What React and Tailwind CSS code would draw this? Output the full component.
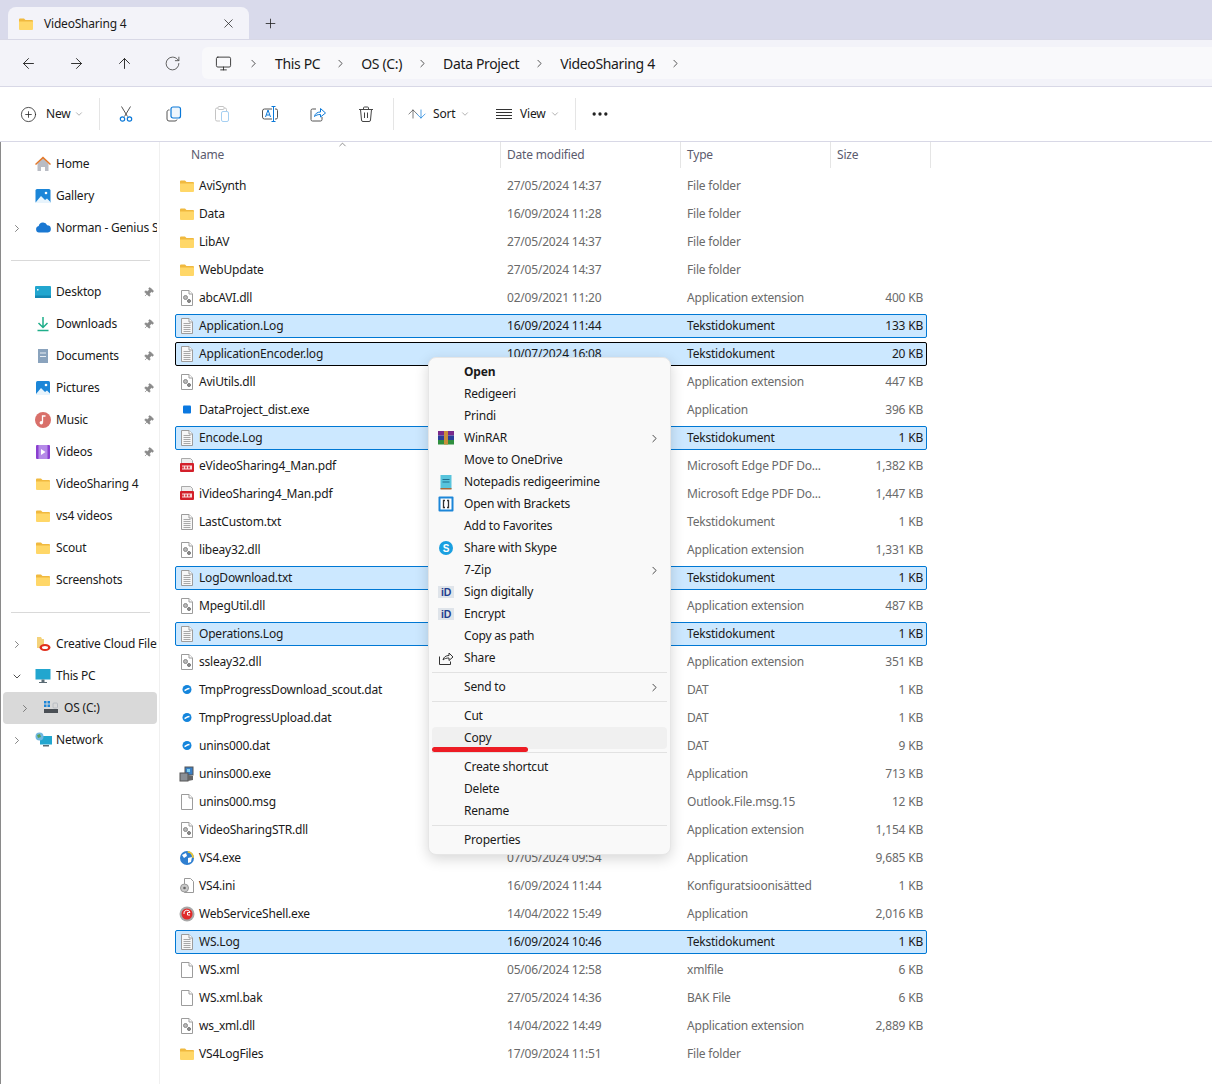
import { ArrowLeft, ArrowRight, ArrowUp, RotateCw, Monitor, ChevronRight, ChevronDown, ChevronUp, Plus, X, CirclePlus, Ellipsis, Pin, ArrowDown } from 'lucide-react';

const Page = ({ children, fold = '#fff' }) => (
  <svg width="16" height="16" viewBox="0 0 16 16" className="shrink-0">
    <path d="M2.500 .5h7.500l3.500 3.500v11.500h-11z" fill={fold} stroke="#9c9c9c" />
    <path d="M10 .5v3.500h3.500" fill="#fff" stroke="#9c9c9c" />
    {children}
  </svg>
);

const FolderIcon = ({ size = 16 }) => (
  <svg width={size} height={size} viewBox="0 0 16 16" className="shrink-0">
    <path d="M1 3.500a1 1 0 0 1 1-1h4l1.500 1.500H14a1 1 0 0 1 1 1v1H1z" fill="#f0b93f" />
    <path d="M1 5.500h14v7.500a1 1 0 0 1-1 1H2a1 1 0 0 1-1-1z" fill="#ffd768" />
  </svg>
);

const icons = {
  folder: <FolderIcon />,
  dll: (
    <Page>
      <circle cx="6.500" cy="7.500" r="2" fill="#b8b8b8" stroke="#8a8a8a" />
      <circle cx="10" cy="11" r="1.500" fill="#8f8f8f" stroke="#777" />
    </Page>
  ),
  txt: (
    <Page fold="#f7f7f7">
      <path d="M4.500 5.500h7M4.500 7.500h7M4.500 9.500h7M4.500 11.500h7M4.500 13.500h7" stroke="#a8a8a8" />
    </Page>
  ),
  blank: <Page />,
  pdf: (
    <svg width="16" height="16" viewBox="0 0 16 16" className="shrink-0">
      <path d="M2.500 .5h9l2 2v4h-11z" fill="#eee" stroke="#aaa" />
      <rect x="1" y="5" width="14" height="9" rx="1" fill="#d3202a" />
      <rect x="3" y="7.500" width="10" height="4" fill="#f8dcdc" />
      <path d="M4 8.500v2M7 8.500v2M10 8.500v2" stroke="#d3202a" strokeWidth="1.500" />
    </svg>
  ),
  square: (
    <svg width="16" height="16" viewBox="0 0 16 16" className="shrink-0">
      <rect x="4" y="3.500" width="8" height="8" rx="1" fill="#0a78e0" />
    </svg>
  ),
  dat: (
    <svg width="16" height="16" viewBox="0 0 16 16" className="shrink-0">
      <circle cx="8" cy="7.500" r="4.500" fill="#1485dc" />
      <path d="M5.500 8.500c1.500-.2 2.500-2 5-2" stroke="#fff" strokeWidth="1.400" fill="none" />
    </svg>
  ),
  setup: (
    <svg width="16" height="16" viewBox="0 0 16 16" className="shrink-0">
      <rect x="6" y="1" width="8" height="8" fill="#3a7fc4" stroke="#555" />
      <rect x="1" y="7" width="8" height="8" fill="#8a8f95" stroke="#555" />
      <path d="M9 9l5 1v4l-5 1z" fill="#666" />
      <rect x="8" y="3" width="3" height="3" fill="#7fd0f0" />
    </svg>
  ),
  globe: (
    <svg width="16" height="16" viewBox="0 0 16 16" className="shrink-0">
      <circle cx="8" cy="8" r="7" fill="#2f7fd0" />
      <path d="M3 5l4-2 1 3-3 2zM9 8l4-1-1 5-3 1z" fill="#fff" />
      <path d="M9 1a7 7 0 0 1 6 7l-2-.5A5 5 0 0 0 8.500 2.500z" fill="#f3c92e" />
    </svg>
  ),
  ini: (
    <svg width="16" height="16" viewBox="0 0 16 16" className="shrink-0">
      <path d="M5.500 .5h6l3 3v11h-9z" fill="#fff" stroke="#999" />
      <circle cx="5.500" cy="10" r="4" fill="#c9c9c9" stroke="#999" />
      <circle cx="5.500" cy="10" r="1.300" fill="#666" />
    </svg>
  ),
  service: (
    <svg width="16" height="16" viewBox="0 0 16 16" className="shrink-0">
      <circle cx="8" cy="8" r="7.500" fill="#a8a8a8" />
      <circle cx="8" cy="8" r="5.500" fill="#e02a2a" />
      <path d="M5 8a3 3 0 0 1 6-1.500H8.500V9H11" stroke="#fff" fill="none" />
    </svg>
  ),
};

const files = [
  ['AviSynth', 'folder', '27/05/2024 14:37', 'File folder', ''],
  ['Data', 'folder', '16/09/2024 11:28', 'File folder', ''],
  ['LibAV', 'folder', '27/05/2024 14:37', 'File folder', ''],
  ['WebUpdate', 'folder', '27/05/2024 14:37', 'File folder', ''],
  ['abcAVI.dll', 'dll', '02/09/2021 11:20', 'Application extension', '400 KB'],
  ['Application.Log', 'txt', '16/09/2024 11:44', 'Tekstidokument', '133 KB', 'sel'],
  ['ApplicationEncoder.log', 'txt', '10/07/2024 16:08', 'Tekstidokument', '20 KB', 'focus'],
  ['AviUtils.dll', 'dll', '', 'Application extension', '447 KB'],
  ['DataProject_dist.exe', 'square', '', 'Application', '396 KB'],
  ['Encode.Log', 'txt', '', 'Tekstidokument', '1 KB', 'sel'],
  ['eVideoSharing4_Man.pdf', 'pdf', '', 'Microsoft Edge PDF Do...', '1,382 KB'],
  ['iVideoSharing4_Man.pdf', 'pdf', '', 'Microsoft Edge PDF Do...', '1,447 KB'],
  ['LastCustom.txt', 'txt', '', 'Tekstidokument', '1 KB'],
  ['libeay32.dll', 'dll', '', 'Application extension', '1,331 KB'],
  ['LogDownload.txt', 'txt', '', 'Tekstidokument', '1 KB', 'sel'],
  ['MpegUtil.dll', 'dll', '', 'Application extension', '487 KB'],
  ['Operations.Log', 'txt', '', 'Tekstidokument', '1 KB', 'sel'],
  ['ssleay32.dll', 'dll', '', 'Application extension', '351 KB'],
  ['TmpProgressDownload_scout.dat', 'dat', '', 'DAT', '1 KB'],
  ['TmpProgressUpload.dat', 'dat', '', 'DAT', '1 KB'],
  ['unins000.dat', 'dat', '', 'DAT', '9 KB'],
  ['unins000.exe', 'setup', '', 'Application', '713 KB'],
  ['unins000.msg', 'blank', '', 'Outlook.File.msg.15', '12 KB'],
  ['VideoSharingSTR.dll', 'dll', '', 'Application extension', '1,154 KB'],
  ['VS4.exe', 'globe', '07/05/2024 09:54', 'Application', '9,685 KB'],
  ['VS4.ini', 'ini', '16/09/2024 11:44', 'Konfiguratsioonisätted', '1 KB'],
  ['WebServiceShell.exe', 'service', '14/04/2022 15:49', 'Application', '2,016 KB'],
  ['WS.Log', 'txt', '16/09/2024 10:46', 'Tekstidokument', '1 KB', 'sel'],
  ['WS.xml', 'blank', '05/06/2024 12:58', 'xmlfile', '6 KB'],
  ['WS.xml.bak', 'blank', '27/05/2024 14:36', 'BAK File', '6 KB'],
  ['ws_xml.dll', 'dll', '14/04/2022 14:49', 'Application extension', '2,889 KB'],
  ['VS4LogFiles', 'folder', '17/09/2024 11:51', 'File folder', ''],
];

const sideIcons = {
  home: (
    <svg width="18" height="18" viewBox="0 0 18 18" className="shrink-0">
      <path d="M3.500 8.500L9 3.500l5.500 5v7.500h-3.500v-4H7v4H3.500z" fill="#b9bcc4" />
      <path d="M1 9l8-7.500L17 9l-1 1-7-6.300L2 10z" fill="#e2792c" />
    </svg>
  ),
  gallery: (
    <svg width="16" height="16" viewBox="0 0 16 16" className="shrink-0">
      <rect x="0.500" y="1" width="15" height="14" rx="1.500" fill="#1c86d8" />
      <path d="M1 14l5-6 4 4 2-1.500 3 3V15H1z" fill="#e8f4fc" />
      <circle cx="11" cy="5" r="1.300" fill="#fff" />
    </svg>
  ),
  cloud: (
    <svg width="17" height="16" viewBox="0 0 17 16" className="shrink-0">
      <path d="M4 12.500a3.300 3.300 0 0 1-.3-6.500 4.500 4.500 0 0 1 8.500-.8A3.700 3.700 0 0 1 13 12.500z" fill="#1a78d2" />
    </svg>
  ),
  desktop: (
    <svg width="16" height="16" viewBox="0 0 16 16" className="shrink-0">
      <rect x="0" y="2" width="16" height="12" rx="1" fill="#22a6cf" />
      <rect x="0" y="11.500" width="16" height="2.500" fill="#1488b4" />
      <rect x="2" y="5" width="1.500" height="1.500" fill="#fff" />
    </svg>
  ),
  downloads: (
    <svg width="16" height="16" viewBox="0 0 16 16" className="shrink-0" fill="none" stroke="#1fae8a" strokeWidth="1.500">
      <path d="M8 1v10M3.500 7L8 11.500 12.500 7M2.500 14.500h11" />
    </svg>
  ),
  documents: (
    <svg width="16" height="16" viewBox="0 0 16 16" className="shrink-0">
      <path d="M3 1h10v14H3z" fill="#8aa3bd" />
      <path d="M5 5h6M5 8.500h6" stroke="#e8eef4" />
    </svg>
  ),
  pictures: (
    <svg width="16" height="16" viewBox="0 0 16 16" className="shrink-0">
      <rect x="1" y="1" width="14" height="14" rx="1.500" fill="#1c86d8" />
      <path d="M1 14l5-6 4 4 2-1.500 3 3V15H1z" fill="#e8f4fc" />
      <circle cx="11" cy="5" r="1.300" fill="#fff" />
    </svg>
  ),
  music: (
    <svg width="16" height="16" viewBox="0 0 16 16" className="shrink-0">
      <circle cx="8" cy="8" r="8" fill="#d9706a" />
      <path d="M7.500 10.500V4h3" stroke="#fff" fill="none" strokeWidth="1.300" />
      <circle cx="6.300" cy="10.800" r="1.700" fill="#fff" />
    </svg>
  ),
  videos: (
    <svg width="16" height="16" viewBox="0 0 16 16" className="shrink-0">
      <rect x="1" y="1" width="14" height="14" rx="1" fill="#8a3fd0" />
      <rect x="3.500" y="1" width="9" height="14" fill="#b58ae8" />
      <path d="M6 5l4.500 3L6 11z" fill="#fff" />
    </svg>
  ),
  folder: <FolderIcon />,
  creative: (
    <svg width="16" height="16" viewBox="0 0 16 16" className="shrink-0">
      <path d="M2 1h4l1 2h2v9H2z" fill="#f4d27a" />
      <ellipse cx="10" cy="11.500" rx="5.500" ry="3.500" fill="#e0301e" />
      <ellipse cx="10" cy="11.500" rx="3" ry="1.500" fill="#fff" />
    </svg>
  ),
  pc: (
    <svg width="16" height="16" viewBox="0 0 16 16" className="shrink-0">
      <rect x="0.500" y="1" width="15" height="10.500" fill="#22a6cf" />
      <rect x="6.500" y="11.500" width="3" height="2.500" fill="#5b6b74" />
      <rect x="4" y="14" width="8" height="1" fill="#5b6b74" />
    </svg>
  ),
  drive: (
    <svg width="16" height="16" viewBox="0 0 16 16" className="shrink-0">
      <rect x="1" y="1" width="2.500" height="2.500" fill="#1c86d8" />
      <rect x="4.500" y="1" width="2.500" height="2.500" fill="#1c86d8" />
      <rect x="1" y="4.500" width="2.500" height="2.500" fill="#1c86d8" />
      <rect x="4.500" y="4.500" width="2.500" height="2.500" fill="#1c86d8" />
      <rect x="1" y="9" width="14" height="4" fill="#4a4f55" />
      <rect x="10" y="3" width="4.500" height="5" rx="1" fill="none" stroke="#b8bcc2" />
    </svg>
  ),
  network: (
    <svg width="17" height="16" viewBox="0 0 17 16" className="shrink-0">
      <rect x="5" y="4" width="12" height="8.500" fill="#22a6cf" />
      <rect x="8" y="13" width="6" height="1.500" fill="#5b6b74" />
      <circle cx="4.500" cy="4.500" r="4" fill="#6fb7e0" />
      <path d="M2 3l3-1 1 3-3 1z" fill="#5aa05a" />
    </svg>
  ),
};

const sidebar = [
  [['Home', 'home'], ['Gallery', 'gallery'], ['Norman - Genius Systems', 'cloud', 'right']],
  [
    ['Desktop', 'desktop', null, true],
    ['Downloads', 'downloads', null, true],
    ['Documents', 'documents', null, true],
    ['Pictures', 'pictures', null, true],
    ['Music', 'music', null, true],
    ['Videos', 'videos', null, true],
    ['VideoSharing 4', 'folder'],
    ['vs4 videos', 'folder'],
    ['Scout', 'folder'],
    ['Screenshots', 'folder'],
  ],
];

const menu = [
  { label: 'Open', bold: true },
  { label: 'Redigeeri' },
  { label: 'Prindi' },
  { label: 'WinRAR', icon: 'winrar', more: true },
  { label: 'Move to OneDrive' },
  { label: 'Notepadis redigeerimine', icon: 'notepad' },
  { label: 'Open with Brackets', icon: 'brackets' },
  { label: 'Add to Favorites' },
  { label: 'Share with Skype', icon: 'skype' },
  { label: '7-Zip', more: true },
  { label: 'Sign digitally', icon: 'id' },
  { label: 'Encrypt', icon: 'id' },
  { label: 'Copy as path' },
  { label: 'Share', icon: 'share' },
  'sep',
  { label: 'Send to', more: true },
  'sep',
  { label: 'Cut' },
  { label: 'Copy', hover: true },
  'sep',
  { label: 'Create shortcut' },
  { label: 'Delete' },
  { label: 'Rename' },
  'sep',
  { label: 'Properties' },
];

const menuIcons = {
  winrar: (
    <svg width="16" height="16" viewBox="0 0 16 16">
      <rect y="1" width="16" height="4.500" fill="#7a2a8c" />
      <rect y="5.500" width="16" height="4.500" fill="#2a3f9c" />
      <rect y="10" width="16" height="4.500" fill="#2f8f3f" />
      <rect x="6" y="1" width="4" height="13.500" fill="#c98f3a" />
    </svg>
  ),
  notepad: (
    <svg width="16" height="16" viewBox="0 0 16 16">
      <rect x="2.500" y="1" width="11" height="14" fill="#58c4dc" />
      <rect x="2.500" y="14" width="11" height="1.500" fill="#a8683a" />
      <path d="M4.500 5.500h7M4.500 8h7" stroke="#1f6f8f" />
    </svg>
  ),
  brackets: (
    <svg width="16" height="16" viewBox="0 0 16 16">
      <rect x="0.500" y="0.500" width="15" height="15" rx="1" fill="#1c86d8" />
      <rect x="2.500" y="2.500" width="11" height="11" fill="#fff" />
      <path d="M7 4.500H5.500v7H7M9 4.500h1.500v7H9" stroke="#333" fill="none" strokeWidth="1.300" />
    </svg>
  ),
  skype: (
    <svg width="16" height="16" viewBox="0 0 16 16">
      <circle cx="8" cy="8" r="7" fill="#1a9fe0" />
      <text x="8" y="11.500" textAnchor="middle" fontSize="10" fontWeight="700" fill="#fff" fontFamily="Liberation Sans, sans-serif">S</text>
    </svg>
  ),
  id: (
    <svg width="16" height="16" viewBox="0 0 16 16">
      <rect y="2" width="16" height="12" fill="#dfe4ea" />
      <text x="8" y="12" textAnchor="middle" fontSize="10.500" fontWeight="700" fill="#1f3f8f" fontFamily="Liberation Sans, sans-serif">iD</text>
    </svg>
  ),
  share: (
    <svg width="16" height="16" viewBox="0 0 16 16" fill="none" stroke="#333">
      <path d="M1.500 6.500v8h11v-3M5 10c.5-3 3-4.500 6-4.500V3l4 4-4 3.500V8c-2.500 0-4.500.5-6 2z" />
    </svg>
  ),
};

function SideItem({ label, icon, chevron, pin, active, indent }) {
  return (
    <div className={`ml-[2px] flex h-8 w-[154px] items-center rounded-[4px] ${active ? 'bg-[#d9d9d9]' : ''}`}>
      <span className={`flex w-3 shrink-0 justify-center ${indent ? 'ml-4' : 'ml-2'}`}>
        {chevron === 'right' && <ChevronRight size={13} strokeWidth={1.5} className="text-[#5c5c5c]" />}
        {chevron === 'down' && <ChevronDown size={13} strokeWidth={1.6} className="text-[#222]" />}
      </span>
      <span className="ml-3 flex w-4 shrink-0 items-center justify-center">{sideIcons[icon]}</span>
      <span className="ml-[5px] min-w-0 flex-1 overflow-hidden whitespace-nowrap">{label}</span>
      {pin && <Pin size={11} strokeWidth={1.5} fill="#8a8a8a" className="mr-[3px] shrink-0 rotate-45 text-[#8a8a8a]" />}
    </div>
  );
}

function ToolIcon({ children }) {
  return <div className="flex w-12 shrink-0 items-center justify-center">{children}</div>;
}

function Crumb({ children }) {
  return (
    <>
      <span className="whitespace-nowrap">{children}</span>
      <ChevronRight size={13} strokeWidth={1.5} className="mx-[14px] shrink-0 text-[#333]" />
    </>
  );
}

function FileRow({ name, icon, date, type, size, state }) {
  const selected = state === 'sel' || state === 'focus';
  return (
    <div
      className={`mb-1 flex h-6 items-center rounded-[2px] border ${
        state === 'focus' ? 'border-black bg-[#cce8ff]' : state === 'sel' ? 'border-[#0078d4] bg-[#cce8ff]' : 'border-transparent'
      }`}
    >
      <span className="ml-[3px] flex w-4 shrink-0 justify-center">{icons[icon]}</span>
      <span className="ml-1 w-[308px] shrink-0 whitespace-nowrap text-[#1a1a1a]">{name}</span>
      <span className={`w-[180px] shrink-0 whitespace-nowrap ${selected ? 'text-[#1a1a1a]' : 'text-[#6a6a6a]'}`}>{date}</span>
      <span className={`flex-1 whitespace-nowrap ${selected ? 'text-[#1a1a1a]' : 'text-[#6a6a6a]'}`}>{type}</span>
      <span className={`mr-[3px] whitespace-nowrap ${selected ? 'text-[#1a1a1a]' : 'text-[#6a6a6a]'}`}>{size}</span>
    </div>
  );
}

export default function App() {
  return (
    <div className="relative h-[1084px] w-full overflow-hidden bg-white font-['Noto_Sans',sans-serif] text-[12px] tracking-[-0.2px] text-[#1a1a1a]">
      {/* tab strip */}
      <div className="flex h-[39px] items-end bg-[#d9daeb] pl-2">
        <div className="flex h-8 w-[241px] items-center rounded-t-lg bg-[#f3f3f9] pl-[10px] pt-[1px]">
          <FolderIcon />
          <span className="ml-[10px] flex-1 whitespace-nowrap">VideoSharing 4</span>
          <X size={15} strokeWidth={1.2} className="mr-[13px] text-[#222]" />
        </div>
        <Plus size={15} strokeWidth={1.3} className="mb-2 ml-[14px] text-[#222]" />
      </div>

      {/* address row */}
      <div className="flex h-[48px] items-center border-y border-[#d8d8e6] bg-[#f3f3f9]">
        <div className="flex w-[202px] shrink-0 items-center pl-1">
          {[ArrowLeft, ArrowRight, ArrowUp, RotateCw].map((Icon, i) => (
            <div key={i} className="flex w-12 justify-center">
              <Icon size={17} strokeWidth={1.3} className={i === 3 ? 'text-[#555]' : 'text-[#222]'} />
            </div>
          ))}
        </div>
        <div className="flex h-8 flex-1 items-center rounded-l-md bg-[#f9f9fb] pl-[13px] text-[14px] tracking-[-0.35px]">
          <Monitor size={17} strokeWidth={1.2} className="text-[#222]" />
          <ChevronRight size={13} strokeWidth={1.5} className="mx-[15px] shrink-0 text-[#333]" />
          <Crumb>This PC</Crumb>
          <Crumb>OS (C:)</Crumb>
          <Crumb>Data Project</Crumb>
          <Crumb>VideoSharing 4</Crumb>
        </div>
      </div>

      {/* command bar */}
      <div className="flex h-[55px] items-center border-b border-[#d8d8e6] bg-white">
        <div className="flex w-[99px] shrink-0 items-center">
          <CirclePlus size={17} strokeWidth={1.1} className="ml-[20px] text-[#222]" />
          <span className="ml-[9px]">New</span>
          <ChevronDown size={10} strokeWidth={1.2} className="ml-[4px] text-[#666]" />
        </div>
        <div className="mr-[2px] h-8 w-px bg-[#e5e5e5]" />
        <ToolIcon>
          <svg width="16" height="16" viewBox="0 0 16 16" fill="none">
            <path d="M3.500 .5l6 10M12.500 .5l-6 10" stroke="#555" />
            <circle cx="4.500" cy="13" r="2.200" stroke="#0a78d8" strokeWidth="1.200" />
            <circle cx="11.500" cy="13" r="2.200" stroke="#0a78d8" strokeWidth="1.200" />
          </svg>
        </ToolIcon>
        <ToolIcon>
          <svg width="16" height="16" viewBox="0 0 16 16" fill="none">
            <path d="M3.500 4a2 2 0 0 0-2.500 2v7a2 2 0 0 0 2 2h6a2 2 0 0 0 2-1.500" stroke="#555" />
            <rect x="5" y="1" width="9.500" height="11" rx="2" fill="#eef6fd" stroke="#0a78d8" strokeWidth="1.200" />
          </svg>
        </ToolIcon>
        <ToolIcon>
          <svg width="16" height="16" viewBox="0 0 16 16" fill="none">
            <path d="M6 15H3a1.500 1.500 0 0 1-1.500-1.500v-10A1.500 1.500 0 0 1 3 2h8a1.500 1.500 0 0 1 1.500 1.500V5" stroke="#c4c4c4" />
            <rect x="4" y="0.500" width="6" height="3" rx="1" fill="#fff" stroke="#c4c4c4" />
            <rect x="7.500" y="5.500" width="7" height="10" rx="1.500" stroke="#a6d0f2" />
          </svg>
        </ToolIcon>
        <ToolIcon>
          <svg width="16" height="16" viewBox="0 0 16 16" fill="none">
            <path d="M10 3H2.500a2 2 0 0 0-2 2v6a2 2 0 0 0 2 2H10M13 3h1a1.500 1.500 0 0 1 1.500 1.500v7A1.500 1.500 0 0 1 14 13h-1" stroke="#555" />
            <path d="M11.500 1v14M9.500 .5h4M9.500 15.500h4" stroke="#0a78d8" />
            <path d="M3.500 11l2.500-7 2.500 7M4.500 9h3" stroke="#0a78d8" />
          </svg>
        </ToolIcon>
        <ToolIcon>
          <svg width="16" height="16" viewBox="0 0 16 16" fill="none">
            <path d="M6 3H2.500a1.500 1.500 0 0 0-1.500 1.500v9A1.500 1.500 0 0 0 2.500 15h8a1.500 1.500 0 0 0 1.500-1.500V11" stroke="#555" />
            <path d="M4.500 10.500c.5-3 3-4.500 6-4.500V2.500l5 4.500-5 4V8.500c-2.500 0-4.500.5-6 2z" stroke="#0a78d8" />
          </svg>
        </ToolIcon>
        <ToolIcon>
          <svg width="16" height="16" viewBox="0 0 16 16" fill="none" stroke="#444">
            <path d="M1 3.500h14M5.500 3.500V2a1 1 0 0 1 1-1h3a1 1 0 0 1 1 1v1.500M2.500 3.500l1 10.500a1.500 1.500 0 0 0 1.500 1.500h6a1.500 1.500 0 0 0 1.500-1.500l1-10.500M6.500 6.500v5.500M9.500 6.500v5.500" />
          </svg>
        </ToolIcon>
        <div className="ml-[3px] h-8 w-px bg-[#e5e5e5]" />
        <div className="flex w-[94px] shrink-0 items-center">
          <ArrowUp size={14} strokeWidth={1.1} className="ml-3 -mr-[6px] text-[#333]" />
          <ArrowDown size={14} strokeWidth={1.2} className="text-[#0a78d8]" />
          <span className="ml-[5px]">Sort</span>
          <ChevronDown size={10} strokeWidth={1.2} className="ml-[5px] text-[#666]" />
        </div>
        <div className="flex w-[87px] shrink-0 items-center">
          <svg width="16" height="16" viewBox="0 0 16 16" fill="none" stroke="#333" className="ml-2">
            <path d="M0 3.500h16M0 6.500h16M0 9.500h16M0 12.500h16" />
          </svg>
          <span className="ml-2">View</span>
          <ChevronDown size={10} strokeWidth={1.2} className="ml-[5px] text-[#666]" />
        </div>
        <div className="h-8 w-px bg-[#e5e5e5]" />
        <Ellipsis size={20} strokeWidth={2} className="ml-[14px] text-[#222]" />
      </div>

      <div className="flex border-l border-[#8a8a8a]">
        {/* nav pane */}
        <div className="h-[942px] w-[159px] shrink-0 border-r border-[#f0f0f0] pt-[6px]">
          {sidebar[0].map(([label, icon, chevron]) => (
            <SideItem key={label} label={label} icon={icon} chevron={chevron} />
          ))}
          <div className="flex h-8 items-center"><div className="ml-[10px] h-px w-[139px] bg-[#d9d9d9]" /></div>
          {sidebar[1].map(([label, icon, chevron, pin]) => (
            <SideItem key={label} label={label} icon={icon} chevron={chevron} pin={pin} />
          ))}
          <div className="flex h-8 items-center"><div className="ml-[10px] h-px w-[139px] bg-[#d9d9d9]" /></div>
          <SideItem label="Creative Cloud Files" icon="creative" chevron="right" />
          <SideItem label="This PC" icon="pc" chevron="down" />
          <SideItem label="OS (C:)" icon="drive" chevron="right" active indent />
          <SideItem label="Network" icon="network" chevron="right" />
        </div>

        {/* file list */}
        <div className="min-w-0 flex-1">
          <div className="relative flex h-[26px] text-[#5b5b6e]">
            <div className="w-[341px] border-r border-[#e5e5e5] pl-[31px] pt-[4px]">Name</div>
            <div className="w-[180px] border-r border-[#e5e5e5] pl-[6px] pt-[4px]">Date modified</div>
            <div className="w-[150px] border-r border-[#e5e5e5] pl-[6px] pt-[4px]">Type</div>
            <div className="w-[100px] border-r border-[#e5e5e5] pl-[6px] pt-[4px]">Size</div>
            <ChevronUp size={11} strokeWidth={1.4} className="absolute left-[177px] top-[-3px] text-[#555]" />
          </div>
          <div className="w-[767px] pl-[15px] pt-[6px]">
            {files.map(([name, icon, date, type, size, state]) => (
              <FileRow key={name} name={name} icon={icon} date={date} type={type} size={size} state={state} />
            ))}
          </div>
        </div>
      </div>

      {/* context menu */}
      <div className="absolute left-[428px] top-[357px] w-[243px] rounded-lg border border-[#e6e6e6] bg-[#f9f9f9] p-[3px] shadow-[0_4px_14px_rgba(0,0,0,0.16)]">
        {menu.map((item, i) =>
          item === 'sep' ? (
            <div key={i} className="flex h-[7px] items-center"><div className="h-px w-full bg-[#e2e2e2]" /></div>
          ) : (
            <div key={i} className={`flex h-[22px] items-center rounded-[4px] pl-[6px] ${item.hover ? 'bg-[#f0f0f0]' : ''}`}>
              <span className="flex h-4 w-4 shrink-0 items-center justify-center">{item.icon && menuIcons[item.icon]}</span>
              <span className={`ml-[10px] flex-1 whitespace-nowrap ${item.bold ? 'font-bold' : ''}`}>{item.label}</span>
              {item.more && <ChevronRight size={13} strokeWidth={1.5} className="mr-[6px] text-[#222]" />}
            </div>
          )
        )}
      </div>

      {/* red annotation under Copy */}
      <div className="absolute left-[432px] top-[747px] h-[5px] w-[96px] rounded-full bg-[#ed1c24]" />
    </div>
  );
}
